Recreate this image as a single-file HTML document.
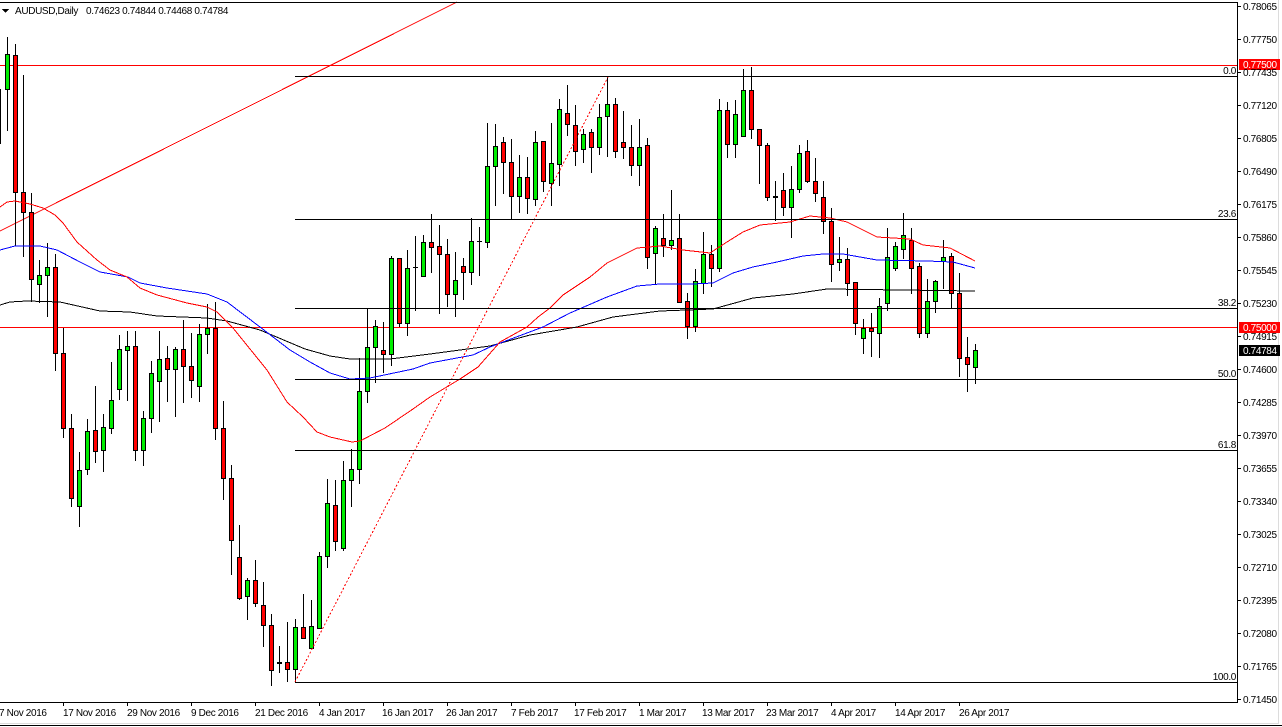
<!DOCTYPE html>
<html><head><meta charset="utf-8"><title>AUDUSD,Daily</title>
<style>
html,body{margin:0;padding:0;background:#fff;width:1282px;height:727px;overflow:hidden}
svg{position:absolute;left:0;top:0;display:block}
text{font-family:"Liberation Sans",sans-serif;font-size:10px;letter-spacing:-.35px;fill:#000}
.s{shape-rendering:crispEdges}
</style></head><body>
<svg width="1282" height="727" viewBox="0 0 1282 727" xmlns="http://www.w3.org/2000/svg">
<g class="s" fill="none">
<path d="M0 65.5H1237M0 327.5H1237" stroke="#f00"/>
<path d="M0 231L457 2" stroke="#f00"/>
<path stroke="#000" d="M7.5 37V131M15.5 44V246M23.5 75V257M31.5 193V302M39.5 260V303M47.5 243V317M55.5 254V371M63.5 328V438M71.5 414V507M79.5 452V527M87.5 419V475M95.5 386V463M103.5 414V472M111.5 362V434M119.5 335V400M127.5 331V401M135.5 331V461M143.5 411V466M151.5 361V433M159.5 331V422M167.5 346V402M175.5 347V417M183.5 320V403M191.5 333V398M199.5 324V402M207.5 304V354M215.5 302V440M223.5 401V500M231.5 465V575M239.5 525V600M247.5 578V620M255.5 560V607M263.5 582V647M271.5 614V686M279.5 646V673M287.5 622V682M295.5 619V682M303.5 594V639M311.5 600V648M319.5 552V628M327.5 479V568M335.5 480V551M343.5 461V551M351.5 449V507M359.5 358V484M367.5 308V403M375.5 320V383M383.5 322V373M391.5 256V366M399.5 258V327M407.5 250V336M415.5 236V311M423.5 235V277M431.5 214V273M439.5 225V314M447.5 239V307M455.5 252V317M463.5 258V300M471.5 218V285M479.5 227V276M487.5 123V248M495.5 124V206M503.5 137V194M511.5 139V219M519.5 155V213M527.5 157V214M535.5 131V206M543.5 141V192M551.5 123V206M559.5 99V186M567.5 85V136M575.5 105V166M583.5 129V163M591.5 129V173M599.5 104V155M607.5 77V157M615.5 98V158M623.5 111V159M631.5 125V176M639.5 119V186M647.5 138V269M655.5 226V285M663.5 214V257M671.5 190V250M679.5 214V303M687.5 293V339M695.5 269V332M703.5 232V294M711.5 245V287M719.5 99V272M727.5 102V158M735.5 100V158M743.5 69V136M751.5 67V139M759.5 129V184M767.5 143V201M775.5 181V221M783.5 173V216M791.5 166V238M799.5 145V193M807.5 140V183M815.5 158V202M823.5 181V234M831.5 208V282M839.5 237V271M847.5 248V296M855.5 282V335M863.5 319V354M871.5 313V357M879.5 298V358M887.5 228V311M895.5 242V271M903.5 213V259M911.5 228V294M919.5 263V338M927.5 279V338M935.5 280V313M943.5 240V289M951.5 253V308M959.5 273V377M967.5 337V392M975.5 344V384"/>
<path stroke="#000" d="M277 663.5h5M277 662.5h5M413 267.5h5M477 241.5h5M773 197.5h5M773 196.5h5"/>
<path stroke="#000" fill="#0e0" d="M-3.5 89.5h4v54h-4zM5.5 54.5h4v35h-4zM37.5 275.5h4v9h-4zM45.5 267.5h4v8h-4zM77.5 470.5h4v36h-4zM85.5 431.5h4v38h-4zM101.5 427.5h4v23h-4zM109.5 400.5h4v28h-4zM117.5 349.5h4v40h-4zM125.5 346.5h4v4h-4zM141.5 418.5h4v32h-4zM149.5 373.5h4v45h-4zM157.5 359.5h4v22h-4zM173.5 349.5h4v20h-4zM197.5 334.5h4v52h-4zM205.5 328.5h4v6h-4zM245.5 580.5h4v16h-4zM293.5 627.5h4v42h-4zM309.5 626.5h4v22h-4zM317.5 556.5h4v72h-4zM325.5 503.5h4v53h-4zM341.5 480.5h4v68h-4zM349.5 469.5h4v11h-4zM357.5 391.5h4v78h-4zM365.5 347.5h4v44h-4zM373.5 326.5h4v21h-4zM389.5 258.5h4v96h-4zM405.5 268.5h4v55h-4zM421.5 242.5h4v34h-4zM453.5 280.5h4v14h-4zM469.5 241.5h4v31h-4zM485.5 166.5h4v76h-4zM493.5 146.5h4v20h-4zM517.5 177.5h4v19h-4zM533.5 142.5h4v57h-4zM549.5 163.5h4v20h-4zM557.5 109.5h4v55h-4zM581.5 134.5h4v15h-4zM597.5 117.5h4v30h-4zM605.5 104.5h4v12h-4zM637.5 147.5h4v18h-4zM653.5 228.5h4v25h-4zM669.5 240.5h4v5h-4zM693.5 281.5h4v45h-4zM701.5 254.5h4v29h-4zM717.5 110.5h4v158h-4zM733.5 114.5h4v30h-4zM741.5 90.5h4v46h-4zM789.5 189.5h4v18h-4zM797.5 153.5h4v36h-4zM837.5 259.5h4v3h-4zM861.5 328.5h4v10h-4zM877.5 306.5h4v27h-4zM885.5 257.5h4v46h-4zM893.5 246.5h4v22h-4zM901.5 235.5h4v14h-4zM925.5 301.5h4v32h-4zM933.5 281.5h4v20h-4zM941.5 257.5h4v4h-4zM973.5 350.5h4v17h-4z"/>
<path stroke="#000" fill="#f00" d="M13.5 55.5h4v137h-4zM21.5 192.5h4v20h-4zM29.5 212.5h4v67h-4zM53.5 267.5h4v86h-4zM61.5 353.5h4v75h-4zM69.5 428.5h4v70h-4zM93.5 430.5h4v21h-4zM133.5 346.5h4v104h-4zM165.5 358.5h4v11h-4zM181.5 349.5h4v17h-4zM189.5 366.5h4v14h-4zM213.5 328.5h4v100h-4zM221.5 428.5h4v50h-4zM229.5 478.5h4v62h-4zM237.5 557.5h4v41h-4zM253.5 580.5h4v23h-4zM261.5 605.5h4v20h-4zM269.5 625.5h4v45h-4zM285.5 662.5h4v7h-4zM301.5 627.5h4v11h-4zM333.5 505.5h4v36h-4zM381.5 350.5h4v4h-4zM397.5 258.5h4v65h-4zM429.5 242.5h4v5h-4zM437.5 246.5h4v8h-4zM445.5 254.5h4v40h-4zM461.5 266.5h4v6h-4zM501.5 142.5h4v20h-4zM509.5 162.5h4v34h-4zM525.5 177.5h4v21h-4zM541.5 141.5h4v40h-4zM565.5 113.5h4v11h-4zM573.5 125.5h4v26h-4zM589.5 132.5h4v15h-4zM613.5 104.5h4v47h-4zM621.5 142.5h4v5h-4zM629.5 147.5h4v18h-4zM645.5 145.5h4v112h-4zM661.5 238.5h4v7h-4zM677.5 238.5h4v64h-4zM685.5 301.5h4v25h-4zM709.5 254.5h4v14h-4zM725.5 110.5h4v34h-4zM749.5 90.5h4v39h-4zM757.5 129.5h4v16h-4zM765.5 145.5h4v52h-4zM781.5 190.5h4v17h-4zM805.5 151.5h4v30h-4zM813.5 181.5h4v12h-4zM821.5 197.5h4v24h-4zM829.5 221.5h4v43h-4zM845.5 259.5h4v24h-4zM853.5 282.5h4v41h-4zM869.5 328.5h4v3h-4zM909.5 240.5h4v28h-4zM917.5 266.5h4v67h-4zM949.5 256.5h4v37h-4zM957.5 293.5h4v65h-4zM965.5 357.5h4v7h-4z"/>
<polyline stroke="#000" points="0,305 10,302 27,301 60,302 100,311 130,312 157,316 207,318 227,321 260,330 305,349 330,356 350,359 390,359 430,354 490,346 530,335 577,327 613,317 660,311 713,309 753,298 793,294 827,289 975,291"/>
<polyline stroke="#00f" points="0,250 15,246 40,246 57,250 80,262 100,272 128,277 140,283 167,288 207,294 227,302 260,327 290,350 310,362 330,373 350,379 370,378 413,369 430,363 473,355 490,347 503,342 543,327 570,313 607,297 637,286 660,284 693,284 713,283 733,273 753,267 777,262 803,256 823,254 843,254 877,260 927,261 953,262 975,268"/>
<polyline stroke="#f00" points="0,207 7,202 15,201 30,204 43,208 55,215 63,223 77,242 97,260 110,270 127,277 140,288 157,295 187,303 207,307 217,312 233,328 250,349 267,370 287,402 303,417 317,432 330,437 352,442 360,441 385,428 413,409 430,397 460,379 478,367 500,342 527,327 538,317 550,308 563,295 590,277 607,263 637,248 660,246 683,250 710,253 727,242 743,232 760,225 790,222 810,216 830,218 847,222 877,237 910,239 923,245 950,248 975,261"/>
<path d="M295 682L608 77" stroke="#f00" stroke-dasharray="2 2"/>
<path stroke="#000" d="M295 76.5H1237M295 219.5H1237M295 308.5H1237M295 379.5H1237M295 450.5H1237M295 682.5H1237"/>
<path stroke="#000" d="M0 2.5H1238M1237.5 2V703M0 702.5H1238"/>
<path stroke="#000" d="M1238 6.5h3M1238 39.5h3M1238 72.5h3M1238 105.5h3M1238 138.5h3M1238 171.5h3M1238 204.5h3M1238 237.5h3M1238 270.5h3M1238 303.5h3M1238 336.5h3M1238 369.5h3M1238 402.5h3M1238 435.5h3M1238 468.5h3M1238 501.5h3M1238 534.5h3M1238 567.5h3M1238 600.5h3M1238 633.5h3M1238 666.5h3M1238 699.5h3"/>
<path stroke="#000" d="M63.5 702v4M127.5 702v4M191.5 702v4M255.5 702v4M319.5 702v4M383.5 702v4M447.5 702v4M511.5 702v4M575.5 702v4M639.5 702v4M703.5 702v4M767.5 702v4M831.5 702v4M895.5 702v4M959.5 702v4"/>
<path stroke="#dcdcdc" d="M0 723.5H1279M1278.5 0V724"/>
<path stroke="#000" d="M0 725.5H1282"/>
<path fill="#000" stroke="none" d="M2 9h7l-3.500 4z"/>
<rect x="1239" y="59" width="41" height="11" fill="#f00"/>
<rect x="1239" y="322" width="41" height="11" fill="#f00"/>
<rect x="1239" y="345" width="41" height="11" fill="#000"/>
</g>
<text x="15" y="14">AUDUSD,Daily</text>
<text x="86" y="14">0.74623 0.74844 0.74468 0.74784</text>
<g>
<text x="1243" y="10">0.78065</text>
<text x="1243" y="43">0.77750</text>
<text x="1243" y="76">0.77435</text>
<text x="1243" y="109">0.77120</text>
<text x="1243" y="142">0.76805</text>
<text x="1243" y="175">0.76490</text>
<text x="1243" y="208">0.76175</text>
<text x="1243" y="241">0.75860</text>
<text x="1243" y="274">0.75545</text>
<text x="1243" y="307">0.75230</text>
<text x="1243" y="340">0.74915</text>
<text x="1243" y="373">0.74600</text>
<text x="1243" y="406">0.74285</text>
<text x="1243" y="439">0.73970</text>
<text x="1243" y="472">0.73655</text>
<text x="1243" y="505">0.73340</text>
<text x="1243" y="538">0.73025</text>
<text x="1243" y="571">0.72710</text>
<text x="1243" y="604">0.72395</text>
<text x="1243" y="637">0.72080</text>
<text x="1243" y="670">0.71765</text>
<text x="1243" y="703">0.71450</text>
</g>
<g style="fill:#fff">
<text x="1243" y="68" style="fill:#fff">0.77500</text>
<text x="1243" y="331" style="fill:#fff">0.75000</text>
<text x="1243" y="354" style="fill:#fff">0.74784</text>
</g>
<g text-anchor="end">
<text x="1236" y="74">0.0</text>
<text x="1236" y="217">23.6</text>
<text x="1236" y="306">38.2</text>
<text x="1236" y="377">50.0</text>
<text x="1236" y="448">61.8</text>
<text x="1236" y="680">100.0</text>
</g>
<g>
<text x="-1" y="716">7 Nov 2016</text>
<text x="63" y="716">17 Nov 2016</text>
<text x="127" y="716">29 Nov 2016</text>
<text x="191" y="716">9 Dec 2016</text>
<text x="255" y="716">21 Dec 2016</text>
<text x="319" y="716">4 Jan 2017</text>
<text x="382" y="716">16 Jan 2017</text>
<text x="446" y="716">26 Jan 2017</text>
<text x="511" y="716">7 Feb 2017</text>
<text x="574" y="716">17 Feb 2017</text>
<text x="639" y="716">1 Mar 2017</text>
<text x="702" y="716">13 Mar 2017</text>
<text x="766" y="716">23 Mar 2017</text>
<text x="831" y="716">4 Apr 2017</text>
<text x="895" y="716">14 Apr 2017</text>
<text x="959" y="716">26 Apr 2017</text>
</g>
</svg>
</body></html>
